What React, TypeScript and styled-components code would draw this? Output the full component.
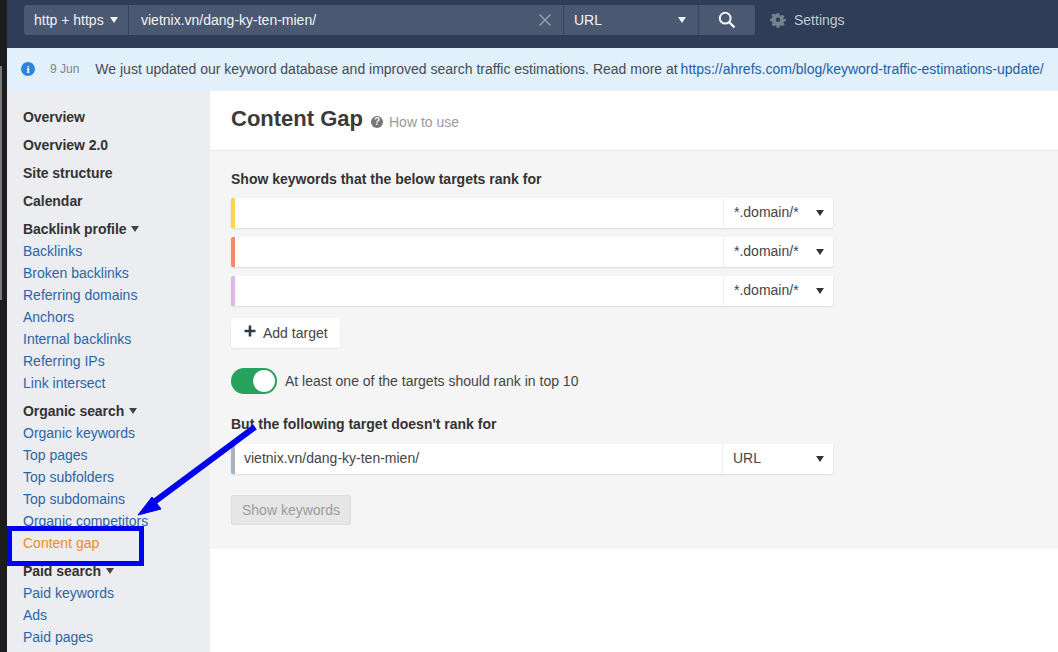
import React from "react";
import styled, { createGlobalStyle } from "styled-components";

const Global = createGlobalStyle`
  html, body { margin: 0; padding: 0; height: 652px; overflow: hidden; background: #fff; }
  body { font-family: "Liberation Sans", Arial, sans-serif; font-size: 14px; color: #333; }
  * { box-sizing: border-box; }
`;

const Shell = styled.div`
  position: relative; width: 1058px; height: 652px; overflow: hidden;
  display: flex;
`;
const Edge = styled.div`
  width: 7px; height: 652px; background: #1c1c1c; flex: none; position: relative;
`;
const EdgeThumb = styled.div`
  position: absolute; left: 0; top: 66px; width: 2px; height: 234px; background: #777;
`;
const Page = styled.div`
  flex: 1; min-width: 0; display: flex; flex-direction: column;
`;
const TopBar = styled.header`
  height: 48px; flex: none; background: #2f3d58; display: flex; align-items: flex-start;
  padding: 5px 0 0 17px;
`;
const SearchGroup = styled.div`
  display: flex; height: 30px; background: #4a5872; border-radius: 3px; color: #f2f4f7; overflow: hidden;
`;
const Seg = styled.div<{ $w: number; $pad?: number }>`
  width: ${p => p.$w}px; padding-left: ${p => p.$pad ?? 10}px; display: flex; align-items: center;
  border-right: 1px solid #36435d; font-size: 14px; position: relative;
  &:last-child { border-right: none; }
`;
const Caret = styled.span<{ $c?: string }>`
  display: inline-block; width: 0; height: 0; border-left: 4px solid transparent; border-right: 4px solid transparent;
  border-top: 6px solid ${p => p.$c ?? "#f2f4f7"};
`;
const ProtoCaret = styled(Caret)`
  margin-left: 6px;
`;
const CaretRight = styled(Caret)`
  position: absolute; right: 12px; top: 12px;
`;
const ClearX = styled.svg`
  position: absolute; right: 12px; top: 9px;
`;
const SearchBtn = styled(Seg)`
  justify-content: center; padding-left: 0;
`;
const Settings = styled.div`
  display: flex; align-items: center; gap: 8px; margin-left: 15px; height: 30px; color: #c3c9d3; font-size: 14px;
`;
const Banner = styled.div`
  height: 43px; flex: none; background: #e2f0fb; display: flex; align-items: center; padding: 0 0 2px 14px; color: #444c55; font-size: 14px;
  white-space: nowrap;
`;
const InfoDot = styled.span`
  width: 14px; height: 14px; border-radius: 50%; background: #2b86d6; color: #fff; font: bold 11px/14px "Liberation Serif", serif; text-align: center; flex: none;
`;
const BannerDate = styled.span`
  color: #7b858f; font-size: 12px; margin: 0 16px 0 15px;
`;
const BLink = styled.span`
  color: #1c5fa8; margin-left: -1px;
`;
const Body = styled.div`
  flex: 1; display: flex; min-height: 0;
`;
const Side = styled.nav`
  width: 203px; flex: none; background: #ebedf0; padding: 15px 0 0 16px;
`;
const SideHead = styled.div<{ $mb?: number; $mt?: number }>`
  height: 22px; line-height: 22px; font-weight: bold; color: #333; font-size: 14px; margin-bottom: ${p => p.$mb ?? 0}px; margin-top: ${p => p.$mt ?? 0}px;
  display: flex; align-items: center; gap: 5px; letter-spacing: -0.05px;
`;
const SideLink = styled.div<{ $on?: boolean }>`
  height: 22px; line-height: 22px; color: ${p => (p.$on ? "#f08c1a" : "#2a65a8")}; font-size: 14px; white-space: nowrap;
`;
const Main = styled.main`
  flex: 1; min-width: 0; display: flex; flex-direction: column;
`;
const TitleBar = styled.div`
  height: 60px; flex: none; border-bottom: 1px solid #e9e9e9; padding: 0 0 3px 21px; display: flex; align-items: center; align-self: stretch;
`;
const Title = styled.h1`
  margin: 0; font-size: 22px; font-weight: bold; color: #3a3a3a;
`;
const HelpDot = styled.span`
  width: 12px; height: 12px; border-radius: 50%; background: #777; color: #f4f4f4; font: bold 10px/12px "Liberation Sans", sans-serif; text-align: center;
  margin: 5px 6px 0 8px;
`;
const HowTo = styled.span`
  color: #9a9a9a; font-size: 14px; margin-top: 5px;
`;
const Form = styled.section`
  height: 398px; flex: none; background: #f5f5f5; padding: 20px 0 0 21px;
`;
const Label = styled.div<{ $mt?: number }>`
  font-weight: bold; font-size: 14px; color: #333; line-height: 17px; margin-top: ${p => p.$mt ?? 0}px;
`;
const TargetRow = styled.div<{ $c: string; $mt?: number }>`
  width: 602px; height: 30px; margin-top: ${p => p.$mt ?? 9}px; background: #fff; border-left: 4px solid ${p => p.$c};
  border-radius: 2px; display: flex; box-shadow: 0 1px 2px rgba(0,0,0,0.1);
`;
const TargetInput = styled.div`
  flex: 1; padding-left: 9px; line-height: 28px; color: #444; font-size: 14px; border-right: 1px solid #eee;
`;
const ModeSelect = styled.div<{ $w: number }>`
  width: ${p => p.$w}px; flex: none; padding: 0 0 2px 10px; display: flex; align-items: center; position: relative; color: #444; font-size: 14px;
`;
const DarkCaret = styled(Caret)`
  position: absolute; right: 9px; top: 12px;
`;
const AddBtn = styled.div`
  width: 109px; height: 30px; margin-top: 12px; background: #fff; border-radius: 3px; box-shadow: 0 1px 2px rgba(0,0,0,0.08);
  display: flex; align-items: center; padding-left: 13px; gap: 7px; color: #444; font-size: 14px;
`;
const PlusIcon = styled.svg`
  margin-top: -4px;
`;
const ToggleRow = styled.div`
  display: flex; align-items: center; gap: 8px; margin-top: 20px; color: #444; font-size: 14px;
`;
const Toggle = styled.div`
  width: 46px; height: 26px; border-radius: 13px; background: #27a25d; position: relative;
`;
const Knob = styled.div`
  position: absolute; right: 2px; top: 2px; width: 22px; height: 22px; border-radius: 50%; background: #fff;
`;
const ShowBtn = styled.div`
  width: 120px; height: 30px; margin-top: 21px; background: #e6e6e6; border: 1px solid #ddd; border-radius: 2px;
  color: #9c9c9c; font-size: 14px; line-height: 28px; text-align: center;
`;
const Overlay = styled.svg`
  position: absolute; left: 0; top: 0; pointer-events: none;
`;

const gear = "M12 8.6a3.4 3.4 0 1 0 0 6.8 3.4 3.4 0 0 0 0-6.8zM10 2h4l.6 2.9 1.9.8 2.5-1.6 2.8 2.8-1.6 2.5.8 1.9L24 10v4l-2.9.6-.8 1.9 1.6 2.5-2.8 2.8-2.5-1.6-1.9.8L14 24h-4l-.6-2.9-1.9-.8L5 21.9l-2.8-2.8 1.6-2.5-.8-1.9L0 14v-4l2.9-.6.8-1.9L2.1 5 4.9 2.2l2.5 1.6 1.9-.8z";

export default function App() {
  const backlinks = ["Backlinks", "Broken backlinks", "Referring domains", "Anchors", "Internal backlinks", "Referring IPs", "Link intersect"];
  const organic = ["Organic keywords", "Top pages", "Top subfolders", "Top subdomains", "Organic competitors"];
  const paid = ["Paid keywords", "Ads", "Paid pages"];
  return (
    <Shell>
      <Global />
      <Edge><EdgeThumb /></Edge>
      <Page>
        <TopBar>
          <SearchGroup>
            <Seg $w={105}>http + https<ProtoCaret /></Seg>
            <Seg $w={435} $pad={12}>vietnix.vn/dang-ky-ten-mien/
              <ClearX width="12" height="12" viewBox="0 0 12 12"><path d="M0.5 0.5L11.5 11.5M11.5 0.5L0.5 11.5" stroke="#98a2b3" strokeWidth="1.4" /></ClearX>
            </Seg>
            <Seg $w={135}>URL<CaretRight /></Seg>
            <SearchBtn $w={56}>
              <svg width="18" height="18" viewBox="0 0 18 18" fill="none"><circle cx="7.2" cy="7.2" r="5.4" stroke="#f2f4f7" strokeWidth="2" /><path d="M11.2 11.2L16.5 16.5" stroke="#f2f4f7" strokeWidth="2.4" /></svg>
            </SearchBtn>
          </SearchGroup>
          <Settings>
            <svg width="16" height="17" viewBox="0 0 24 26"><path fillRule="evenodd" fill="#76818f" d={gear} /></svg>
            Settings
          </Settings>
        </TopBar>
        <Banner>
          <InfoDot>i</InfoDot>
          <BannerDate>9 Jun</BannerDate>
          We just updated our keyword database and improved search traffic estimations. Read more at&nbsp;<BLink>https://ahrefs.com/blog/keyword-traffic-estimations-update/</BLink>
        </Banner>
        <Body>
          <Side>
            <SideHead $mb={6}>Overview</SideHead>
            <SideHead $mb={6}>Overview 2.0</SideHead>
            <SideHead $mb={6}>Site structure</SideHead>
            <SideHead $mb={6}>Calendar</SideHead>
            <SideHead>Backlink profile <Caret $c="#444" /></SideHead>
            {backlinks.map(l => <SideLink key={l}>{l}</SideLink>)}
            <SideHead $mt={6}>Organic search <Caret $c="#444" /></SideHead>
            {organic.map(l => <SideLink key={l}>{l}</SideLink>)}
            <SideLink $on>Content gap</SideLink>
            <SideHead $mt={6}>Paid search <Caret $c="#444" /></SideHead>
            {paid.map(l => <SideLink key={l}>{l}</SideLink>)}
          </Side>
          <Main>
            <TitleBar>
              <Title>Content Gap</Title>
              <HelpDot>?</HelpDot>
              <HowTo>How to use</HowTo>
            </TitleBar>
            <Form>
              <Label>Show keywords that the below targets rank for</Label>
              <TargetRow $c="#f9d547" $mt={10}><TargetInput /><ModeSelect $w={109}>*.domain/*<DarkCaret $c="#333" /></ModeSelect></TargetRow>
              <TargetRow $c="#f58a6b"><TargetInput /><ModeSelect $w={109}>*.domain/*<DarkCaret $c="#333" /></ModeSelect></TargetRow>
              <TargetRow $c="#dfb9e8"><TargetInput /><ModeSelect $w={109}>*.domain/*<DarkCaret $c="#333" /></ModeSelect></TargetRow>
              <AddBtn>
                <PlusIcon width="12" height="12" viewBox="0 0 12 12"><path d="M6 0.5V11.5M0.5 6H11.5" stroke="#2e3a48" strokeWidth="2.6" /></PlusIcon>
                Add target
              </AddBtn>
              <ToggleRow><Toggle><Knob /></Toggle>At least one of the targets should rank in top 10</ToggleRow>
              <Label $mt={22}>But the following target doesn't rank for</Label>
              <TargetRow $c="#a9b4bd" $mt={11}><TargetInput>vietnix.vn/dang-ky-ten-mien/</TargetInput><ModeSelect $w={110}>URL<DarkCaret $c="#333" /></ModeSelect></TargetRow>
              <ShowBtn>Show keywords</ShowBtn>
            </Form>
          </Main>
        </Body>
      </Page>
      <Overlay width="1058" height="652" viewBox="0 0 1058 652">
        <path d="M255 427L150 505" stroke="#0000f0" strokeWidth="6" fill="none" />
        <path d="M138 515L152 497L161 509Z" fill="#0000f0" stroke="#0000f0" strokeWidth="1" />
        <rect x="9.5" y="528.5" width="132" height="35" fill="none" stroke="#0000f0" strokeWidth="5" />
      </Overlay>
    </Shell>
  );
}
